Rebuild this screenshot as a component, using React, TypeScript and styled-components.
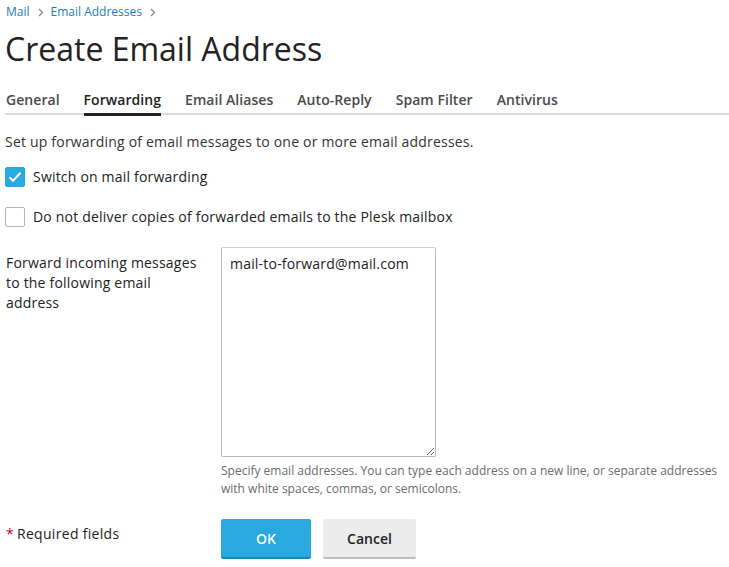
import React, { useState } from 'react';
import styled, { createGlobalStyle, css } from 'styled-components';

const GlobalStyle = createGlobalStyle`
  body {
    margin: 0;
    background: #fff;
    font-family: 'Open Sans', 'Noto Sans', sans-serif;
    color: #222;
  }
  * {
    box-sizing: border-box;
  }
`;

const Page = styled.div`
  padding: 0 0 0 5px;
  width: 729px;
`;

const Breadcrumbs = styled.nav`
  display: flex;
  align-items: center;
  height: 24px;
  padding-left: 1px;
  font-size: 12px;
  line-height: 16px;
`;

const Crumb = styled.a`
  color: #1b7fb4;
  text-decoration: none;
`;

const Chevron = styled.span`
  display: inline-flex;
  margin: 0 7px 0 8px;
  color: #888;
`;

const Title = styled.h1`
  margin: 4px 0 0 0;
  font-size: 32px;
  line-height: 42px;
  font-weight: 400;
  color: #222;
`;

const TabBar = styled.ul`
  display: flex;
  gap: 24px;
  margin: 20px 0 0 0;
  padding: 0 0 0 1px;
  list-style: none;
  border-bottom: 2px solid #dcdcdc;
`;

const Tab = styled.li<{ $active?: boolean }>`
  position: relative;
  font-size: 14px;
  font-weight: 600;
  line-height: 20px;
  padding-bottom: 3px;
  color: #4a4a4a;
  letter-spacing: 0.05px;

  ${(p) =>
    p.$active &&
    css`
      color: #222;
      &::after {
        content: '';
        position: absolute;
        left: 0;
        right: 0;
        bottom: -3px;
        height: 3px;
        background: #222;
      }
    `}
`;

const Intro = styled.p`
  margin: 17px 0 0 0;
  font-size: 14px;
  line-height: 20px;
  letter-spacing: 0.2px;
  color: #333;
`;

const CheckRow = styled.label`
  display: flex;
  align-items: center;
  gap: 8px;
  margin-top: 15px;
  font-size: 14px;
  line-height: 20px;
  letter-spacing: 0.2px;
  color: #222;
  cursor: pointer;

  & + & {
    margin-top: 20px;
  }
`;

const Box = styled.span<{ $checked: boolean }>`
  display: inline-flex;
  align-items: center;
  justify-content: center;
  width: 20px;
  height: 20px;
  border-radius: 2px;
  ${(p) =>
    p.$checked
      ? css`
          background: #28a9e0;
          border: 1px solid #28a9e0;
        `
      : css`
          background: #fff;
          border: 1px solid #b5b5b5;
        `}
`;

const FormRow = styled.div`
  display: grid;
  grid-template-columns: 216px 1fr;
  margin-top: 20px;
`;

const FieldLabel = styled.div`
  padding: 6px 18px 0 1px;
  font-size: 14px;
  line-height: 20px;
  letter-spacing: 0.2px;
  color: #222;
`;

const Field = styled.div`
  display: flex;
  flex-direction: column;
`;

const TextArea = styled.textarea`
  width: 215px;
  height: 210px;
  padding: 6px 8px;
  border: 1px solid #b8b8b8;
  border-top-color: #cfcfcf;
  border-radius: 2px;
  font-family: 'Open Sans', 'Noto Sans', sans-serif;
  font-size: 14px;
  line-height: 20px;
  letter-spacing: 0.2px;
  color: #222;
  resize: both;
  outline: none;
`;

const Hint = styled.div`
  margin-top: 5px;
  padding-right: 8px;
  font-size: 12px;
  line-height: 18px;
  color: #6b6b6b;
`;

const Footer = styled.div`
  display: grid;
  grid-template-columns: 216px 1fr;
  align-items: start;
  margin-top: 21px;
`;

const Required = styled.div`
  padding: 5px 0 0 1px;
  font-size: 14px;
  line-height: 20px;
  letter-spacing: 0.3px;
  color: #222;
`;

const Star = styled.span`
  color: #c4001d;
  margin-right: 3px;
`;

const Buttons = styled.div`
  display: flex;
  gap: 12px;
`;

const Button = styled.button<{ $primary?: boolean }>`
  height: 40px;
  padding: 0 24px;
  border: none;
  border-radius: 2px;
  font-family: 'Open Sans', 'Noto Sans', sans-serif;
  font-size: 14px;
  font-weight: 600;
  cursor: pointer;
  ${(p) =>
    p.$primary
      ? css`
          min-width: 90px;
          background: #28a9e0;
          color: #fff;
          border-bottom: 2px solid #1b86b8;
        `
      : css`
          min-width: 93px;
          background: #ececec;
          color: #222;
          border-bottom: 2px solid #bcbcbc;
        `}
`;

const ChevronIcon = () => (
  <svg width="6" height="9" viewBox="0 0 6 9">
    <path d="M1 1l3.5 3.5L1 8" fill="none" stroke="currentColor" strokeWidth="1.2" />
  </svg>
);

const CheckIcon = () => (
  <svg width="14" height="12" viewBox="0 0 14 12">
    <path d="M1.5 6.2l3.6 3.6L12.5 1.8" fill="none" stroke="#fff" strokeWidth="2" />
  </svg>
);

const tabs = ['General', 'Forwarding', 'Email Aliases', 'Auto-Reply', 'Spam Filter', 'Antivirus'];

const App: React.FC = () => {
  const [forwarding, setForwarding] = useState(true);
  const [noCopies, setNoCopies] = useState(false);

  return (
    <>
      <GlobalStyle />
      <Page>
        <Breadcrumbs>
          <Crumb href="#">Mail</Crumb>
          <Chevron>
            <ChevronIcon />
          </Chevron>
          <Crumb href="#">Email Addresses</Crumb>
          <Chevron>
            <ChevronIcon />
          </Chevron>
        </Breadcrumbs>
        <Title>Create Email Address</Title>
        <TabBar>
          {tabs.map((t) => (
            <Tab key={t} $active={t === 'Forwarding'}>
              {t}
            </Tab>
          ))}
        </TabBar>
        <Intro>Set up forwarding of email messages to one or more email addresses.</Intro>
        <CheckRow onClick={() => setForwarding(!forwarding)}>
          <Box $checked={forwarding}>{forwarding && <CheckIcon />}</Box>
          Switch on mail forwarding
        </CheckRow>
        <CheckRow onClick={() => setNoCopies(!noCopies)}>
          <Box $checked={noCopies}>{noCopies && <CheckIcon />}</Box>
          Do not deliver copies of forwarded emails to the Plesk mailbox
        </CheckRow>
        <FormRow>
          <FieldLabel>Forward incoming messages to the following email address</FieldLabel>
          <Field>
            <TextArea defaultValue="mail-to-forward@mail.com" />
            <Hint>
              Specify email addresses. You can type each address on a new line, or separate addresses
              with white spaces, commas, or semicolons.
            </Hint>
          </Field>
        </FormRow>
        <Footer>
          <Required>
            <Star>*</Star>Required fields
          </Required>
          <Buttons>
            <Button $primary>OK</Button>
            <Button>Cancel</Button>
          </Buttons>
        </Footer>
      </Page>
    </>
  );
};

export default App;
